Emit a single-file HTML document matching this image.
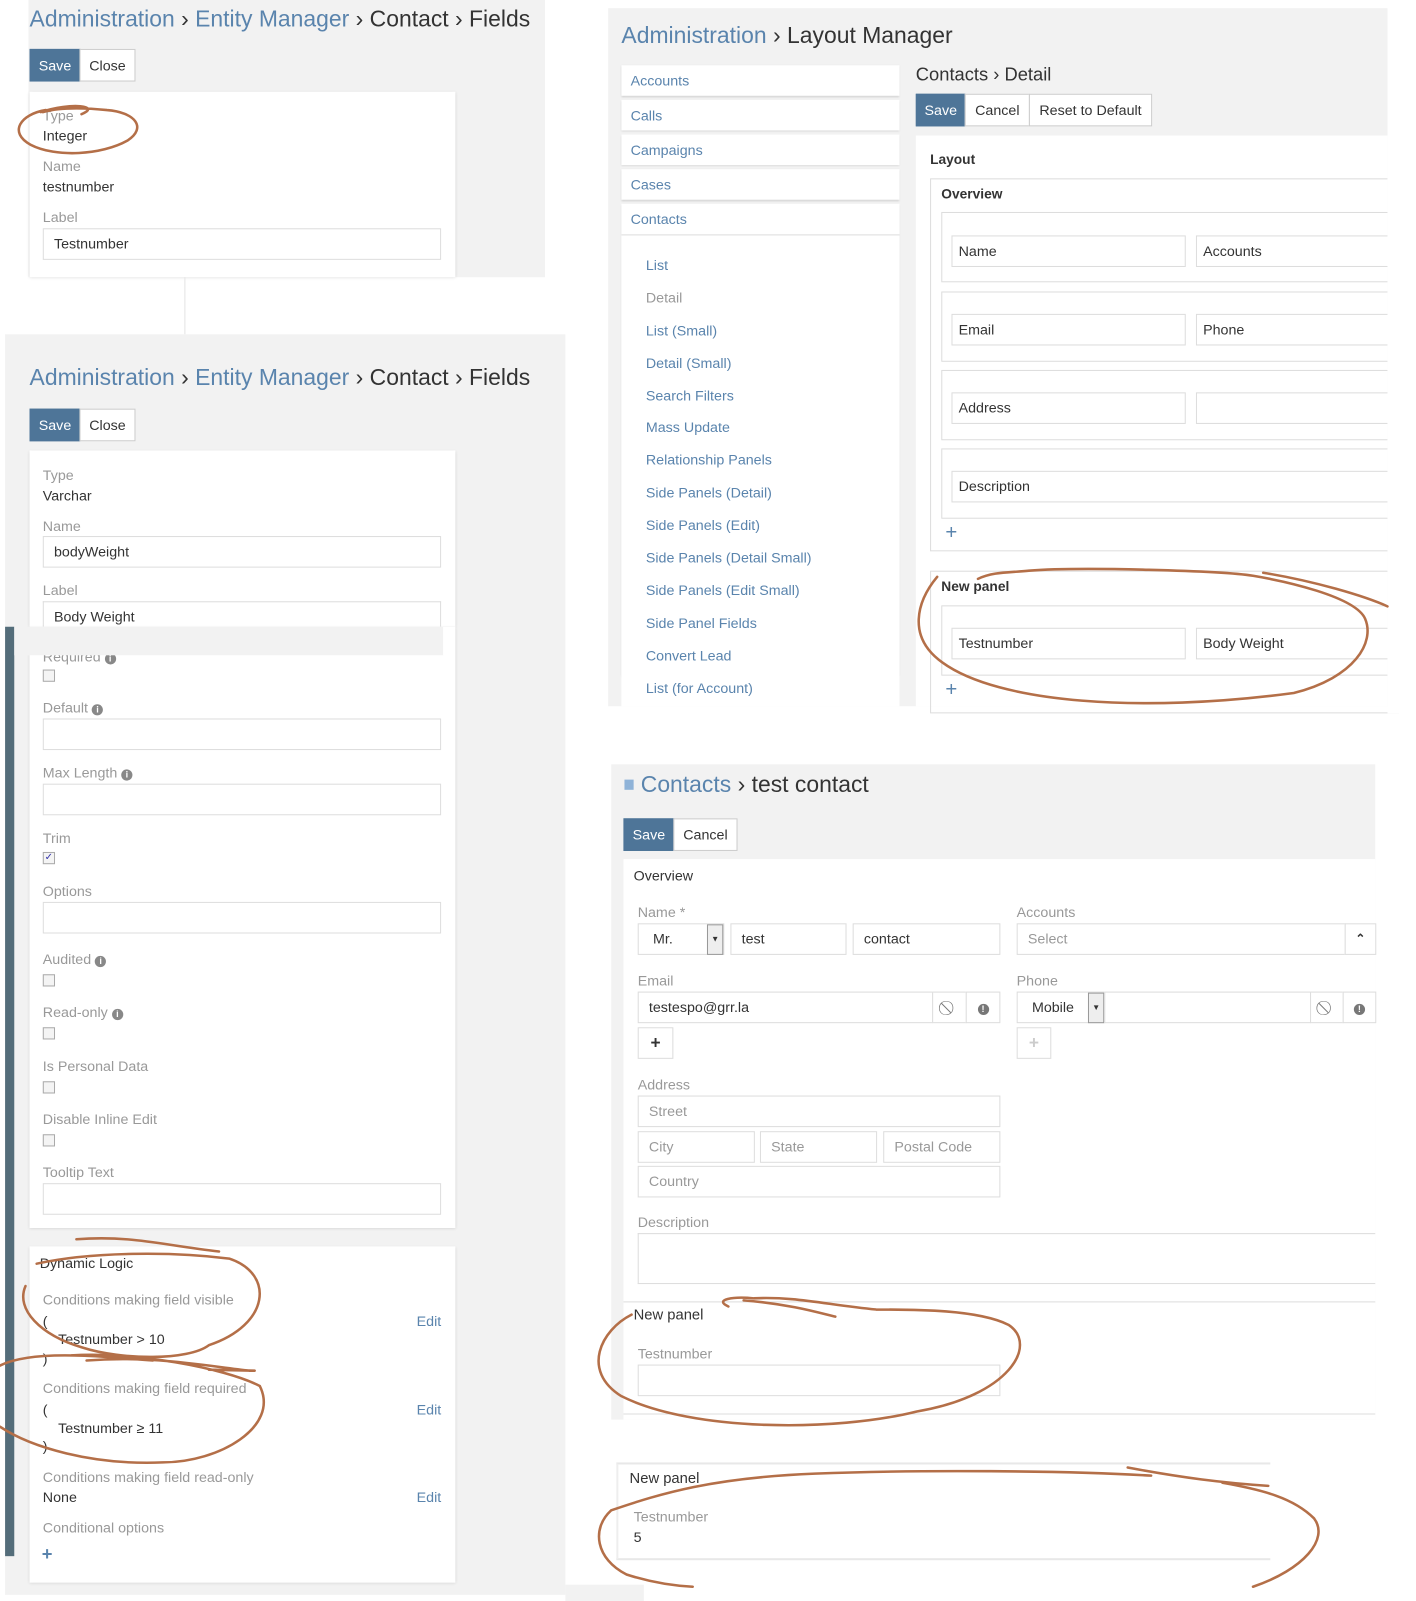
<!DOCTYPE html>
<html><head><meta charset="utf-8">
<style>
*{box-sizing:border-box;margin:0;padding:0}
html,body{width:1416px;height:1601px;overflow:hidden;background:#fff}
#w{position:absolute;left:0;top:0;width:1390px;height:1571px;transform:scale(1.0187,1.0191);transform-origin:0 0;font-family:"Liberation Sans",sans-serif;font-size:14px;color:#333}
.a{position:absolute}
.g{position:absolute;background:#f2f2f2}
.c{position:absolute;background:#fff;box-shadow:0 1px 3px rgba(0,0,0,.12)}
.t{position:absolute;white-space:nowrap;line-height:16px}
.l{color:#999}
.b{color:#5a84ad}
.h{font-size:22.5px;line-height:26px}
.i{position:absolute;border:1px solid #ddd;background:#fff;padding-left:10px;line-height:29px;white-space:nowrap;overflow:hidden}
.btn{position:absolute;border:1px solid #ccc;background:#fff;text-align:center;line-height:30px;height:32px}
.sv{background:#4e7598;color:#fff;border-color:#4e7598}
.cb{position:absolute;width:12px;height:12px;border:1px solid #aaa;background:#f4f4f4}
.inf{display:inline-block;width:11px;height:11px;border-radius:50%;background:#888;color:#fff;font-size:9px;line-height:11px;text-align:center;font-weight:bold;vertical-align:0}
.si{position:absolute;left:610px;width:273px;height:30px;background:#fff;box-shadow:0 1px 2px rgba(0,0,0,.15);padding-left:9px;line-height:30px;color:#5a84ad}
.sub{position:absolute;left:634px;color:#5a84ad;line-height:16px}
.bx{position:absolute;border:1px solid #ddd}
</style></head><body><div id="w">

<!-- Panel A -->
<div class="g" style="left:28px;top:0;width:507px;height:272px"></div>
<div class="t h" style="left:29px;top:6px"><span class="b">Administration</span> › <span class="b">Entity Manager</span> › Contact › Fields</div>
<div class="btn sv" style="left:29px;top:48px;width:50px">Save</div>
<div class="btn" style="left:78px;top:48px;width:55px">Close</div>
<div class="c" style="left:29px;top:90px;width:418px;height:182px"></div>
<div class="t l" style="left:42px;top:105px">Type</div>
<div class="t" style="left:42px;top:125px">Integer</div>
<div class="t l" style="left:42px;top:155px">Name</div>
<div class="t" style="left:42px;top:175px">testnumber</div>
<div class="t l" style="left:42px;top:205px">Label</div>
<div class="i" style="left:42px;top:224px;width:391px;height:31px">Testnumber</div>
<div class="a" style="left:181px;top:272px;width:1px;height:56px;background:#e4e4e4"></div>

<!-- Panel B -->
<div class="g" style="left:5px;top:328px;width:550px;height:1237px"></div>
<div class="t h" style="left:29px;top:358px"><span class="b">Administration</span> › <span class="b">Entity Manager</span> › Contact › Fields</div>
<div class="btn sv" style="left:29px;top:401px;width:50px">Save</div>
<div class="btn" style="left:78px;top:401px;width:55px">Close</div>
<div class="c" style="left:29px;top:442px;width:418px;height:173px"></div>
<div class="t l" style="left:42px;top:458px">Type</div>
<div class="t" style="left:42px;top:478px">Varchar</div>
<div class="t l" style="left:42px;top:508px">Name</div>
<div class="i" style="left:42px;top:526px;width:391px;height:31px">bodyWeight</div>
<div class="t l" style="left:42px;top:571px">Label</div>
<div class="i" style="left:42px;top:590px;width:391px;height:25px;border-bottom:none">Body Weight</div>
<div class="a" style="left:5px;top:615px;width:9px;height:912px;background:#546d7a"></div>
<div class="c" style="left:29px;top:615px;width:418px;height:590px"></div>
<div class="t l" style="left:42px;top:636px">Required <span class="inf">i</span></div>
<div class="g" style="left:14px;top:615px;width:421px;height:28px"></div>
<div class="cb" style="left:42px;top:657px"></div>
<div class="t l" style="left:42px;top:686px">Default <span class="inf">i</span></div>
<div class="i" style="left:42px;top:705px;width:391px;height:31px"></div>
<div class="t l" style="left:42px;top:750px">Max Length <span class="inf">i</span></div>
<div class="i" style="left:42px;top:769px;width:391px;height:31px"></div>
<div class="t l" style="left:42px;top:814px">Trim</div>
<div class="cb" style="left:42px;top:836px;font-size:10px;line-height:10px;color:#33a;text-align:center">✓</div>
<div class="t l" style="left:42px;top:866px">Options</div>
<div class="i" style="left:42px;top:885px;width:391px;height:31px"></div>
<div class="t l" style="left:42px;top:933px">Audited <span class="inf">i</span></div>
<div class="cb" style="left:42px;top:956px"></div>
<div class="t l" style="left:42px;top:985px">Read-only <span class="inf">i</span></div>
<div class="cb" style="left:42px;top:1008px"></div>
<div class="t l" style="left:42px;top:1038px">Is Personal Data</div>
<div class="cb" style="left:42px;top:1061px"></div>
<div class="t l" style="left:42px;top:1090px">Disable Inline Edit</div>
<div class="cb" style="left:42px;top:1113px"></div>
<div class="t l" style="left:42px;top:1142px">Tooltip Text</div>
<div class="i" style="left:42px;top:1161px;width:391px;height:31px"></div>

<div class="c" style="left:29px;top:1223px;width:418px;height:330px"></div>
<div class="t" style="left:39px;top:1231px">Dynamic Logic</div>
<div class="t l" style="left:42px;top:1267px">Conditions making field visible</div>
<div class="t" style="left:42px;top:1288px">(</div>
<div class="t" style="left:57px;top:1306px">Testnumber &gt; 10</div>
<div class="t" style="left:42px;top:1325px">)</div>
<div class="t b" style="left:409px;top:1288px">Edit</div>
<div class="t l" style="left:42px;top:1354px">Conditions making field required</div>
<div class="t" style="left:42px;top:1375px">(</div>
<div class="t" style="left:57px;top:1393px">Testnumber ≥ 11</div>
<div class="t" style="left:42px;top:1411px">)</div>
<div class="t b" style="left:409px;top:1375px">Edit</div>
<div class="t l" style="left:42px;top:1441px">Conditions making field read-only</div>
<div class="t" style="left:42px;top:1461px">None</div>
<div class="t b" style="left:409px;top:1461px">Edit</div>
<div class="t l" style="left:42px;top:1491px">Conditional options</div>
<div class="t b" style="left:41px;top:1517px;font-size:18px;font-weight:bold">+</div>
<div class="g" style="left:555px;top:1555px;width:77px;height:16px"></div>

<!-- Layout Manager -->
<div class="g" style="left:597px;top:8px;width:765px;height:685px"></div>
<div class="t h" style="left:610px;top:22px"><span class="b">Administration</span> › Layout Manager</div>
<div class="si" style="top:64px">Accounts</div>
<div class="si" style="top:98px">Calls</div>
<div class="si" style="top:132px">Campaigns</div>
<div class="si" style="top:166px">Cases</div>
<div class="si" style="top:200px;height:463px;box-shadow:0 1px 2px rgba(0,0,0,.1)">Contacts</div>
<div class="a" style="left:610px;top:230px;width:273px;height:463px;background:#fff;border-top:1px solid #ddd"></div>
<div class="sub" style="top:252px">List</div>
<div class="sub" style="top:284px;color:#999">Detail</div>
<div class="sub" style="top:316px">List (Small)</div>
<div class="sub" style="top:348px">Detail (Small)</div>
<div class="sub" style="top:380px">Search Filters</div>
<div class="sub" style="top:411px">Mass Update</div>
<div class="sub" style="top:443px">Relationship Panels</div>
<div class="sub" style="top:475px">Side Panels (Detail)</div>
<div class="sub" style="top:507px">Side Panels (Edit)</div>
<div class="sub" style="top:539px">Side Panels (Detail Small)</div>
<div class="sub" style="top:571px">Side Panels (Edit Small)</div>
<div class="sub" style="top:603px">Side Panel Fields</div>
<div class="sub" style="top:635px">Convert Lead</div>
<div class="sub" style="top:667px">List (for Account)</div>

<div class="t" style="left:899px;top:63px;font-size:18px;line-height:20px">Contacts › Detail</div>
<div class="btn sv" style="left:899px;top:92px;width:49px">Save</div>
<div class="btn" style="left:947px;top:92px;width:64px">Cancel</div>
<div class="btn" style="left:1010px;top:92px;width:121px">Reset to Default</div>
<div class="a" style="left:899px;top:133px;width:463px;height:560px;background:#fff"></div>
<div class="t" style="left:913px;top:149px;font-weight:bold;font-size:13.5px">Layout</div>
<div class="bx" style="left:913px;top:175px;width:460px;height:366px"></div>
<div class="t" style="left:924px;top:183px;font-weight:bold;font-size:13.5px">Overview</div>
<div class="bx" style="left:924px;top:208px;width:450px;height:69px"></div>
<div class="i" style="left:934px;top:231px;width:230px;height:31px;padding-left:6px">Name</div>
<div class="i" style="left:1174px;top:231px;width:200px;height:31px;padding-left:6px">Accounts</div>
<div class="bx" style="left:924px;top:286px;width:450px;height:69px"></div>
<div class="i" style="left:934px;top:308px;width:230px;height:31px;padding-left:6px">Email</div>
<div class="i" style="left:1174px;top:308px;width:200px;height:31px;padding-left:6px">Phone</div>
<div class="bx" style="left:924px;top:363px;width:450px;height:69px"></div>
<div class="i" style="left:934px;top:385px;width:230px;height:31px;padding-left:6px">Address</div>
<div class="i" style="left:1174px;top:385px;width:200px;height:31px"></div>
<div class="bx" style="left:924px;top:440px;width:450px;height:69px"></div>
<div class="i" style="left:934px;top:462px;width:440px;height:31px;padding-left:6px">Description</div>
<div class="t b" style="left:928px;top:515px;font-size:20px">+</div>
<div class="bx" style="left:913px;top:560px;width:460px;height:140px"></div>
<div class="t" style="left:924px;top:568px;font-weight:bold;font-size:13.5px">New panel</div>
<div class="bx" style="left:924px;top:594px;width:450px;height:69px"></div>
<div class="i" style="left:934px;top:616px;width:230px;height:31px;padding-left:6px">Testnumber</div>
<div class="i" style="left:1174px;top:616px;width:200px;height:31px;padding-left:6px">Body Weight</div>
<div class="t b" style="left:928px;top:669px;font-size:20px">+</div>
<div class="a" style="left:1362px;top:0;width:40px;height:700px;background:#fff"></div>

<!-- Contact edit -->
<div class="g" style="left:600px;top:750px;width:750px;height:643px"></div>
<div class="a" style="left:613px;top:765px;width:9px;height:10px;background:#8fb3d8"></div>
<div class="t h" style="left:629px;top:757px"><span class="b">Contacts</span> › test contact</div>
<div class="btn sv" style="left:612px;top:803px;width:50px">Save</div>
<div class="btn" style="left:661px;top:803px;width:63px">Cancel</div>
<div class="a" style="left:612px;top:843px;width:738px;height:550px;background:#fff"></div>
<div class="t" style="left:622px;top:851px">Overview</div>
<div class="t l" style="left:626px;top:887px">Name *</div>
<div class="i" style="left:626px;top:906px;width:85px;height:31px;padding-left:14px">Mr.</div>
<div class="a" style="left:694px;top:907px;width:16px;height:30px;background:#eee;border:1px solid #999;font-size:8px;text-align:center;line-height:28px">▼</div>
<div class="i" style="left:717px;top:906px;width:114px;height:31px">test</div>
<div class="i" style="left:837px;top:906px;width:145px;height:31px">contact</div>
<div class="t l" style="left:998px;top:887px">Accounts</div>
<div class="i" style="left:998px;top:906px;width:323px;height:31px;color:#999">Select</div>
<div class="i" style="left:1320px;top:906px;width:31px;height:31px;padding:0;text-align:center;font-size:12px;font-weight:bold">⌃</div>
<div class="t l" style="left:626px;top:954px">Email</div>
<div class="i" style="left:626px;top:973px;width:290px;height:31px">testespo@grr.la</div>
<div class="i" style="left:915px;top:973px;width:34px;height:31px;padding:0;text-align:center;color:#777">⃠</div>
<div class="i" style="left:948px;top:973px;width:34px;height:31px;padding:0;text-align:center"><span class="inf" style="background:#777">!</span></div>
<div class="t l" style="left:998px;top:954px">Phone</div>
<div class="i" style="left:998px;top:973px;width:87px;height:31px;padding-left:14px">Mobile</div>
<div class="a" style="left:1068px;top:974px;width:16px;height:30px;background:#eee;border:1px solid #999;font-size:8px;text-align:center;line-height:28px">▼</div>
<div class="i" style="left:1084px;top:973px;width:203px;height:31px"></div>
<div class="i" style="left:1286px;top:973px;width:33px;height:31px;padding:0;text-align:center;color:#777">⃠</div>
<div class="i" style="left:1318px;top:973px;width:33px;height:31px;padding:0;text-align:center"><span class="inf" style="background:#777">!</span></div>
<div class="i" style="left:626px;top:1008px;width:35px;height:31px;padding:0;text-align:center;font-weight:bold;font-size:17px">+</div>
<div class="i" style="left:998px;top:1008px;width:34px;height:31px;padding:0;text-align:center;font-weight:bold;font-size:17px;color:#ccc">+</div>
<div class="t l" style="left:626px;top:1056px">Address</div>
<div class="i" style="left:626px;top:1075px;width:356px;height:31px;color:#999">Street</div>
<div class="i" style="left:626px;top:1110px;width:115px;height:31px;color:#999">City</div>
<div class="i" style="left:746px;top:1110px;width:115px;height:31px;color:#999">State</div>
<div class="i" style="left:867px;top:1110px;width:115px;height:31px;color:#999">Postal Code</div>
<div class="i" style="left:626px;top:1144px;width:356px;height:31px;color:#999">Country</div>
<div class="t l" style="left:626px;top:1191px">Description</div>
<div class="i" style="left:626px;top:1210px;width:724px;height:50px;border-right:none"></div>
<div class="a" style="left:612px;top:1277px;width:738px;height:1px;background:#ddd"></div>
<div class="t" style="left:622px;top:1283px;font-size:14.5px">New panel</div>
<div class="t l" style="left:626px;top:1320px">Testnumber</div>
<div class="i" style="left:626px;top:1339px;width:356px;height:31px"></div>
<div class="a" style="left:612px;top:1387px;width:738px;height:1px;background:#ddd"></div>

<!-- bottom detail -->
<div class="a" style="left:605px;top:1435px;width:642px;height:96px;border-top:2px solid #e8e8e8;border-bottom:2px solid #e8e8e8;border-left:2px solid #eee"></div>
<div class="t" style="left:618px;top:1443px;font-size:14.5px">New panel</div>
<div class="t l" style="left:622px;top:1480px">Testnumber</div>
<div class="t" style="left:622px;top:1500px">5</div>

<!-- annotations -->
<svg class="a" style="left:0;top:0" width="1390" height="1571" viewBox="0 0 1390 1571" fill="none" stroke="#b46f48" stroke-width="2.5" stroke-linecap="round">
<path d="M40 110 C70 100 100 104 80 112 M45 108 C20 112 8 130 30 142 C55 155 100 152 125 138 C145 125 132 110 105 108 C85 106 60 105 42 110"/>
<path d="M75 1216 C130 1212 160 1222 215 1228 M36 1240 C90 1228 170 1228 225 1235 C270 1250 265 1300 205 1320 C185 1335 120 1335 80 1322 C40 1310 15 1285 25 1262"/>
<path d="M0 1340 C30 1325 90 1330 150 1335 M85 1335 C150 1330 200 1340 245 1345 M205 1344 L250 1345 M70 1330 C130 1326 220 1342 255 1360 C275 1400 215 1435 160 1435 C90 1438 30 1420 0 1400"/>
<path d="M920 566 C900 590 890 625 925 650 C980 690 1120 700 1270 680 C1330 665 1350 630 1340 607 C1330 585 1260 570 1230 565 C1200 560 1060 556 1010 560 C990 562 975 561 960 568 M1240 562 C1290 570 1340 585 1362 595"/>
<path d="M620 1290 C590 1305 570 1345 610 1370 C680 1405 820 1405 900 1385 C990 1370 1020 1320 990 1300 C960 1285 900 1285 860 1285 C810 1280 780 1272 740 1274 C720 1272 700 1275 715 1282 M730 1276 C780 1280 810 1290 820 1292"/>
<path d="M1245 1458 C1200 1455 1160 1450 1107 1440 M1130 1448 C1050 1443 900 1442 800 1446 C700 1450 650 1465 600 1482 C580 1500 585 1530 615 1545 C640 1553 660 1556 680 1557 M1230 1557 C1280 1540 1305 1510 1290 1490 C1270 1470 1240 1462 1200 1455"/>
</svg>
</div></body></html>
